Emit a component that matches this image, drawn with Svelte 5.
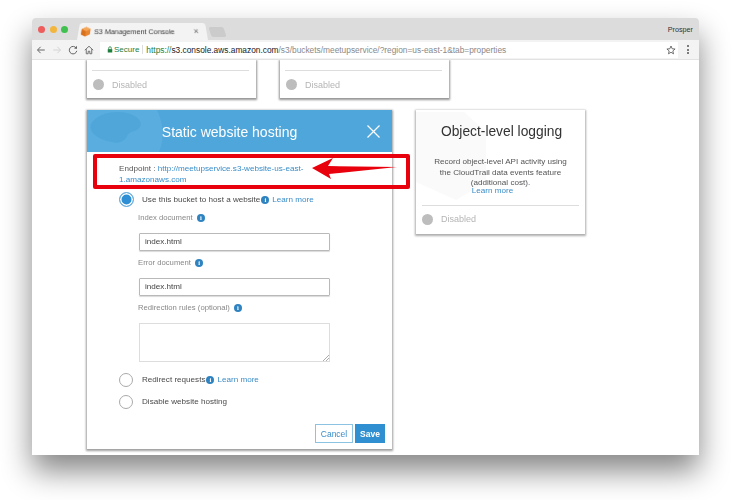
<script>
	const tiles = [1, 2];
</script>

<div class="screen">
	<div class="window">
		<div class="titlebar">
			<div class="lights">
				<span class="light red"></span>
				<span class="light amber"></span>
				<span class="light green"></span>
			</div>
			<div class="tab">
				<svg class="favicon" viewBox="0 0 12 12" width="11" height="11">
					<path d="M6 .5 11 3v6l-5 2.5L1 9V3z" fill="#e8852f" />
					<path d="M6 .5 11 3 6 5.5 1 3z" fill="#f4a75a" />
					<path d="M6 5.500v6L1 9V3z" fill="#d9701d" />
				</svg>
				<span class="tab-title">S3 Management Console</span>
				<span class="tab-close">×</span>
			</div>
			<div class="new-tab"></div>
			<span class="user">Prosper</span>
		</div>

		<div class="toolbar">
			<svg class="nav" viewBox="0 0 12 12" width="10" height="10">
				<path d="M10.500 6H2M5.500 2.200 1.800 6l3.700 3.800" fill="none" stroke="#666" stroke-width="1.2" />
			</svg>
			<svg class="nav" viewBox="0 0 12 12" width="10" height="10">
				<path d="M1.500 6H10M6.500 2.200 10.200 6 6.500 9.800" fill="none" stroke="#d4d4d4" stroke-width="1.2" />
			</svg>
			<svg class="nav" viewBox="0 0 12 12" width="10" height="10">
				<path d="M10 4A4.500 4.500 0 1 0 10.500 7" fill="none" stroke="#666" stroke-width="1.2" />
				<path d="M10.800 1v3.500H7.300z" fill="#666" />
			</svg>
			<svg class="nav" viewBox="0 0 12 12" width="10" height="10">
				<path d="M1 6.200 6 1.500l5 4.700M2.700 5v5.500h2.300V7.500h2v3h2.300V5" fill="none" stroke="#666" stroke-width="1.1" />
			</svg>
			<div class="omnibox">
				<svg viewBox="0 0 8 9" width="6" height="7">
					<path d="M1 4h6v4.500H1z" fill="#1e7e3e" />
					<path d="M2.300 4V2.500a1.700 1.700 0 0 1 3.400 0V4" fill="none" stroke="#1e7e3e" stroke-width="1" />
				</svg>
				<span class="secure">Secure</span>
				<span class="divider"></span>
				<span class="url"><span class="scheme">https://</span><span class="host">s3.console.aws.amazon.com</span>/s3/buckets/meetupservice/?region=us-east-1&amp;tab=properties</span>
				<svg class="star" viewBox="0 0 12 12" width="10" height="10">
					<path d="M6 1.200 7.400 4.500l3.500.3-2.700 2.300.8 3.500L6 8.700l-3 1.900.8-3.500L1.100 4.800l3.500-.3z" fill="none" stroke="#555" stroke-width="1" />
				</svg>
			</div>
			<div class="dots"><i></i><i></i><i></i></div>
		</div>

		<div class="page">
			<div class="row top-row">
				{#each tiles as t (t)}
					<div class="stub">
						<div class="status">
							<span class="dot"></span>
							<span>Disabled</span>
						</div>
					</div>
				{/each}
			</div>

			<div class="row main-row">
				<div class="modal">
					<div class="modal-head">
						<svg class="globe" viewBox="0 0 80 42" width="80" height="42">
							<path d="M0 0h70c6 12 8 28 2 42H0z" fill="#59addf" />
							<path d="M4 14C10 3 28 0 40 3c9 2 16 8 13 14-3 5-10 3-13 9-2 5-8 8-15 6C14 30 1 24 4 14z" fill="#50a6d9" />
						</svg>
						<span class="modal-title">Static website hosting</span>
						<svg class="close" viewBox="0 0 13 13" width="13" height="13">
							<path d="M.5.500l12 12M12.500.500l-12 12" stroke="#fff" stroke-width="1.2" fill="none" />
						</svg>
					</div>

					<div class="modal-body">
						<p class="endpoint">Endpoint : <a href="#endpoint">http://meetupservice.s3-website-us-east-1.amazonaws.com</a></p>

						<div class="option first">
							<span class="radio on"></span>
							<span>Use this bucket to host a website</span>
							<span class="info">i</span>
							<a class="more" href="#more">Learn more</a>
						</div>

						<div class="fields">
							<div class="label">Index document <span class="info">i</span></div>
							<div class="input">index.html</div>
							<div class="label">Error document <span class="info">i</span></div>
							<div class="input">index.html</div>
							<div class="label">Redirection rules (optional) <span class="info">i</span></div>
							<div class="area">
								<svg viewBox="0 0 6 6" width="6" height="6">
									<path d="M0 6 6 0M3 6l3-3" stroke="#888" stroke-width=".7" />
								</svg>
							</div>
						</div>

						<div class="option second">
							<span class="radio"></span>
							<span>Redirect requests</span>
							<span class="info">i</span>
							<a class="more" href="#more">Learn more</a>
						</div>
						<div class="option third">
							<span class="radio"></span>
							<span>Disable website hosting</span>
						</div>

						<div class="actions">
							<button class="cancel">Cancel</button>
							<button class="save">Save</button>
						</div>
					</div>
				</div>

				<div class="log-card">
					<svg class="hex" viewBox="0 0 70 90" width="70" height="90">
						<path d="M0 0h48l22 20v50L40 88 0 70z" fill="#fafafa" />
					</svg>
					<h2>Object-level logging</h2>
					<p>Record object-level API activity using the CloudTrail data events feature (additional cost).</p>
					<a href="#more">Learn more</a>
					<div class="status">
						<span class="dot"></span>
						<span>Disabled</span>
					</div>
				</div>
			</div>

			<!-- annotation drawn on top of the screenshot -->
			<div class="callout"></div>
			<svg class="arrow" viewBox="0 0 86 26" width="86" height="26">
				<path d="M0 13 21 3 16 11 85 12 17 19 19 24z" fill="#e8000d" />
			</svg>
		</div>
	</div>
</div>

<style>
	:global(body) {
		margin: 0;
		background: #fff;
	}

	.screen {
		width: 731px;
		height: 500px;
		padding: 18px 32px 0;
		box-sizing: border-box;
		overflow: hidden;
		font-family: "Liberation Sans", Arial, sans-serif;
		color: #444;
	}

	.window {
		width: 667px;
		height: 437px;
		display: flex;
		flex-direction: column;
		background: #fff;
		border-radius: 4px 4px 0 0;
		box-shadow: 0 16px 30px rgba(0, 0, 0, 0.48);
		filter: blur(0.35px);
	}

	.titlebar {
		height: 22px;
		background: #dcdcdc;
		border-radius: 4px 4px 0 0;
		display: flex;
		align-items: flex-end;
		padding-left: 6px;
		position: relative;
	}

	.lights {
		display: flex;
		gap: 4.500px;
		align-self: center;
	}

	.light {
		width: 7px;
		height: 7px;
		border-radius: 50%;
	}
	.red { background: #ee5c5c; }
	.amber { background: #f3b63c; }
	.green { background: #3fc04f; }

	.tab {
		width: 121px;
		height: 18px;
		margin-left: 9px;
		padding: 0 8px 0 2px;
		background: #f3f3f3;
		border-radius: 3px 3px 0 0;
		transform: perspective(40px) rotateX(6deg);
		transform-origin: bottom;
		display: flex;
		align-items: center;
		gap: 3px;
		font-size: 7.300px;
		color: #333;
	}

	.favicon {
		flex: none;
	}

	.tab-title {
		flex: 1;
		white-space: nowrap;
	}

	.tab-close {
		font-size: 9px;
		color: #666;
	}

	.new-tab {
		width: 15px;
		height: 10px;
		margin: 0 0 3px 2px;
		background: #cbcbcb;
		border-radius: 2px;
		transform: skewX(18deg);
	}

	.user {
		margin-left: auto;
		align-self: center;
		padding-right: 6px;
		margin-top: 1px;
		font-size: 7.200px;
		color: #333;
	}

	.toolbar {
		height: 20px;
		background: #f3f3f3;
		border-bottom: 1px solid #e2e2e2;
		box-sizing: border-box;
		display: flex;
		align-items: center;
		gap: 6px;
		padding-left: 4px;
	}

	.nav {
		flex: none;
	}

	.omnibox {
		width: 578px;
		height: 16px;
		background: #fff;
		display: flex;
		align-items: center;
		padding: 0 2px 0 7px;
		box-sizing: border-box;
		font-size: 8.350px;
		white-space: nowrap;
		color: #8a8a8a;
	}

	.secure {
		margin-left: 1px;
		font-size: 8px;
		color: #1e7e3e;
	}

	.divider {
		width: 1px;
		height: 9px;
		margin: 0 3px;
		background: #ddd;
	}

	.scheme { color: #1e7e3e; }
	.host { color: #222; }

	.star {
		margin-left: auto;
	}

	.dots {
		margin-left: 3px;
		display: flex;
		flex-direction: column;
		gap: 1.500px;
	}

	.dots i {
		width: 2px;
		height: 2px;
		border-radius: 50%;
		background: #555;
	}

	.page {
		flex: 1;
		position: relative;
		overflow: hidden;
		padding-left: 55px;
	}

	.row {
		display: flex;
		align-items: flex-start;
	}

	.top-row {
		height: 50px;
		gap: 24px;
	}

	.stub {
		width: 169px;
		height: 38px;
		box-sizing: border-box;
		padding: 10px 7px 0 5px;
		background: #fff;
		box-shadow: 0 1px 2px 1px rgba(0, 0, 0, 0.42);
		clip-path: inset(0 -4px -4px -4px);
	}

	.status {
		display: flex;
		align-items: center;
		gap: 8px;
		border-top: 1px solid #ddd;
		padding: 8px 0 0;
		font-size: 9px;
		color: #b5b5b5;
	}

	.dot {
		width: 11px;
		height: 11px;
		border-radius: 50%;
		background: #bdbdbd;
	}

	.stub .dot {
		margin-left: 1px;
	}

	.main-row {
		gap: 24px;
	}

	.modal {
		width: 305px;
		height: 339px;
		background: #fff;
		box-shadow: 0 1px 2px 1px rgba(0, 0, 0, 0.38);
		display: flex;
		flex-direction: column;
	}

	.modal-head {
		height: 42px;
		flex: none;
		position: relative;
		overflow: hidden;
		background: #4fa6da;
		display: flex;
		align-items: center;
		justify-content: center;
		color: #fff;
		padding-right: 20px;
		box-sizing: border-box;
	}

	.globe {
		position: absolute;
		left: 0;
		top: 0;
	}

	.modal-title {
		position: relative;
		top: 1px;
		font-size: 14px;
	}

	.close {
		position: absolute;
		left: 280px;
		top: 15px;
	}

	.modal-body {
		flex: 1;
		display: flex;
		flex-direction: column;
		padding: 0 7px 6px 32px;
		font-size: 8.100px;
		color: #555;
	}

	.endpoint {
		width: 195px;
		margin: 12px 0 0;
		line-height: 10.500px;
	}

	a {
		color: #3a8dc8;
		text-decoration: none;
	}

	.option {
		display: flex;
		align-items: center;
		height: 15px;
		color: #4a4a4a;
	}

	.option.first { margin-top: 7px; }
	.option.second { margin-top: 10px; }
	.option.third { margin-top: 7px; }

	.radio {
		flex: none;
		width: 14px;
		height: 14px;
		margin-right: 9px;
		border: 1px solid #aaa;
		border-radius: 50%;
		box-sizing: border-box;
		background: #fff;
	}

	.radio.on {
		width: 15px;
		height: 15px;
		margin-right: 8px;
		background: #2f8fd4;
		border: 1px solid #6aaede;
		box-shadow: inset 0 0 0 1.500px #fff;
	}

	.info {
		display: inline-block;
		width: 8px;
		height: 8px;
		margin-left: 1px;
		border-radius: 50%;
		background: #2f83c0;
		color: #fff;
		font: bold 6.500px/8px "Liberation Serif", serif;
		text-align: center;
		vertical-align: 0.500px;
	}

	.more {
		margin-left: 3px;
	}

	.fields {
		margin-left: 19px;
		width: 192px;
	}

	.label {
		height: 10px;
		line-height: 10px;
		font-size: 7.700px;
		color: #888;
		margin-top: 7px;
		white-space: nowrap;
	}

	.label:first-child {
		margin-top: 6px;
	}

	.label .info {
		margin-left: 2px;
	}

	.input {
		height: 18px;
		box-sizing: border-box;
		margin: 10px 0 0 1px;
		padding-left: 5px;
		border: 1px solid #b9b9b9;
		border-radius: 1px;
		box-shadow: 0 1px 1px rgba(0, 0, 0, 0.15);
		line-height: 16px;
		color: #444;
		width: 191px;
	}

	.area {
		height: 39px;
		box-sizing: border-box;
		margin: 10px 0 0 1px;
		border: 1px solid #ddd;
		position: relative;
	}

	.area svg {
		position: absolute;
		right: 0;
		bottom: 0;
	}

	.actions {
		margin-top: auto;
		display: flex;
		justify-content: flex-end;
		gap: 2px;
	}

	button {
		height: 19px;
		padding: 0;
		font: 8.500px "Liberation Sans", Arial, sans-serif;
		box-sizing: border-box;
	}

	.cancel {
		width: 38px;
		background: #fff;
		border: 1px solid #8cc3e3;
		color: #3a8dc8;
	}

	.save {
		width: 30px;
		background: #2f8fd0;
		border: none;
		color: #fff;
		font-weight: bold;
	}

	.log-card {
		width: 169px;
		height: 124px;
		box-sizing: border-box;
		position: relative;
		padding: 14px 10px 0;
		background: #fff;
		box-shadow: 0 1px 2px 1px rgba(0, 0, 0, 0.32);
		text-align: center;
		font-size: 8.100px;
		color: #555;
		display: flex;
		flex-direction: column;
		align-items: center;
	}

	.hex {
		position: absolute;
		left: 0;
		top: 2px;
	}

	.log-card h2 {
		position: relative;
		left: 1px;
		margin: 0;
		font-size: 13.800px;
		font-weight: normal;
		color: #333;
		line-height: 16px;
		white-space: nowrap;
	}

	.log-card p {
		position: relative;
		margin: 17px 6px 0;
		line-height: 10.500px;
	}

	.log-card a {
		position: relative;
		line-height: 9px;
		margin: -3px 16px 0 0;
	}

	.log-card .status {
		position: relative;
		align-self: stretch;
		margin: 10px -4px 0;
		text-align: left;
	}

	.callout {
		position: absolute;
		left: 61px;
		top: 94px;
		width: 317px;
		height: 35px;
		box-sizing: border-box;
		border: 4.500px solid #e8000d;
		border-radius: 2px;
	}

	.arrow {
		position: absolute;
		left: 280px;
		top: 95px;
	}
</style>
